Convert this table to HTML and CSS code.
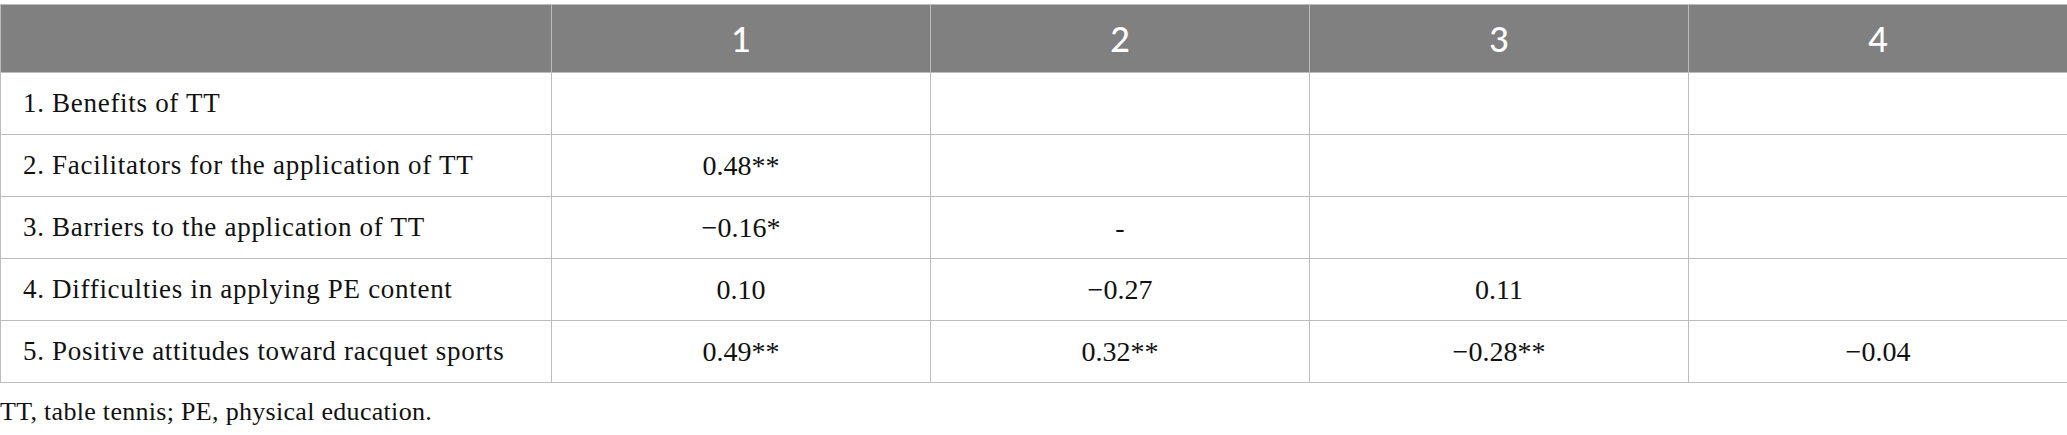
FILE: index.html
```html
<!DOCTYPE html>
<html lang="en">
<head>
<meta charset="utf-8">
<title>Correlations</title>
<link rel="stylesheet" href="styles.css">
</head>
<body>
<div class="page">
  <table class="corr">
    <colgroup>
      <col class="c-label">
      <col class="c-val">
      <col class="c-val">
      <col class="c-val">
      <col class="c-val">
    </colgroup>
    <thead>
      <tr>
        <th></th>
        <th>1</th>
        <th>2</th>
        <th>3</th>
        <th>4</th>
      </tr>
    </thead>
    <tbody>
      <tr>
        <td class="label">1. Benefits of TT</td>
        <td></td><td></td><td></td><td></td>
      </tr>
      <tr>
        <td class="label">2. Facilitators for the application of TT</td>
        <td>0.48**</td><td></td><td></td><td></td>
      </tr>
      <tr>
        <td class="label">3. Barriers to the application of TT</td>
        <td>−0.16*</td><td>-</td><td></td><td></td>
      </tr>
      <tr>
        <td class="label">4. Difficulties in applying PE content</td>
        <td>0.10</td><td>−0.27</td><td>0.11</td><td></td>
      </tr>
      <tr>
        <td class="label">5. Positive attitudes toward racquet sports</td>
        <td>0.49**</td><td>0.32**</td><td>−0.28**</td><td>−0.04</td>
      </tr>
    </tbody>
  </table>
  <p class="note">TT, table tennis; PE, physical education.</p>
</div>
</body>
</html>
```
FILE: styles.css
```css
html, body {
  margin: 0;
  padding: 0;
  background: #ffffff;
}

.page {
  padding-top: 4px;
}

.corr {
  border-collapse: collapse;
  table-layout: fixed;
  width: 2067px;
}

.c-label { width: 551px; }
.c-val { width: 379px; }

.corr th,
.corr td {
  border: 1px solid #bcbcbc;
  padding: 0;
}

.corr th {
  background: #7f807f;
  color: #ffffff;
  font-family: Lato, "Open Sans", sans-serif;
  font-weight: 500;
  font-size: 34px;
  height: 67px;
  text-align: center;
  vertical-align: middle;
}

.corr td {
  height: 61px;
  font-family: "Liberation Serif", "Times New Roman", serif;
  font-size: 28px;
  color: #111111;
  text-align: center;
  vertical-align: middle;
}

.corr td.label {
  text-align: left;
  padding-left: 22px;
  font-size: 27px;
  letter-spacing: 0.7px;
}

.note {
  margin: 14px 0 0 0;
  font-family: "Liberation Serif", "Times New Roman", serif;
  font-size: 26px;
  color: #111111;
  letter-spacing: 0.3px;
}
```
